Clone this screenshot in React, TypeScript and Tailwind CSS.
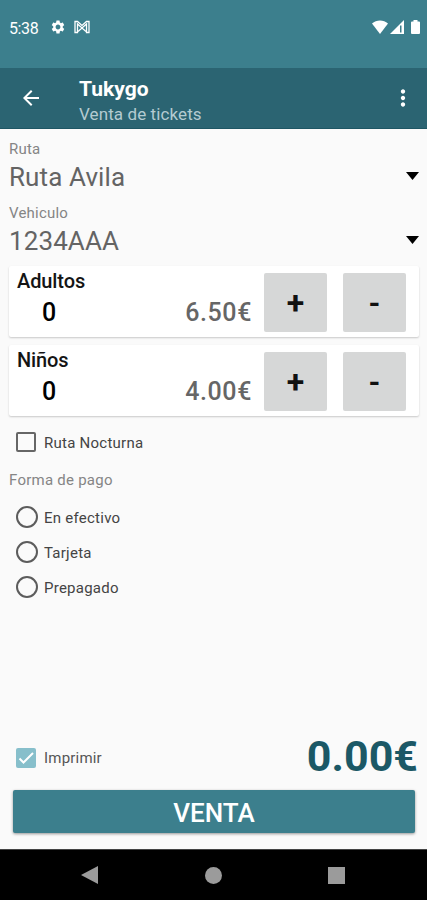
import { useState } from "react";
import { MdArrowBack, MdMoreVert, MdSettings } from "react-icons/md";

const tickets = [
  { id: "adultos", name: "Adultos", price: 6.5 },
  { id: "ninos", name: "Niños", price: 4 },
];

const payments = ["En efectivo", "Tarjeta", "Prepagado"];

function StatusBar() {
  return (
    <div className="flex h-[68px] items-start justify-between bg-[#3c7f8d] pl-[9px] pr-[7px] pt-[17px] text-white">
      <div className="flex h-5 items-center">
        <span className="mt-[3px] w-[41px] text-[16px] leading-5 tracking-[-0.4px]">5:38</span>
        <MdSettings className="h-4 w-4" />
        <svg className="ml-2 h-[14px] w-4" viewBox="0 0 16 14" fill="none" stroke="white">
          <path d="M1 1.500v11h2.500V4L8 8l4.500-4v8.500H15v-11h-2.500L8 5.500l-4.500-4z" strokeWidth="1.300" />
          <path d="M4 11.500l4-3.500 4 3.500" strokeWidth="1.300" />
        </svg>
      </div>
      <div className="flex h-5 items-center">
        <svg className="h-[14px] w-4" viewBox="0 0 16 14" fill="white">
          <path d="M8 14L0 3.500C4.500-.5 11.500-.5 16 3.500z" />
        </svg>
        <svg className="ml-[2px] h-[14px] w-[14px]" viewBox="0 0 14 14">
          <path d="M0 14L14 0v14z" fill="white" />
          <path d="M10 5.500h1.500V12.500H10z" fill="#3c7f8d" />
        </svg>
        <svg className="ml-[7px] h-[14px] w-[9px]" viewBox="0 0 9 14" fill="white">
          <path d="M2.500 0h4v1.500H8q1 0 1 1V13q0 1-1 1H1q-1 0-1-1V2.500q0-1 1-1h1.500z" />
        </svg>
      </div>
    </div>
  );
}

function Field({ label, value }: { label: string; value: string }) {
  return (
    <div className="h-16">
      <div className="text-[15px] leading-5 tracking-[0.2px] text-[#858585]">{label}</div>
      <div className="flex h-9 items-center justify-between">
        <span className="text-[26px] leading-9 tracking-[0.1px] text-[#646464]">{value}</span>
        <svg className="mb-[2px] h-2 w-[13px]" viewBox="0 0 13 8">
          <path d="M0 0h13L6.500 8z" fill="black" />
        </svg>
      </div>
    </div>
  );
}

function TicketCard({
  name,
  price,
  count,
  onChange,
}: {
  name: string;
  price: number;
  count: number;
  onChange: (count: number) => void;
}) {
  return (
    <div className="flex h-[71px] rounded-[2px] bg-white pl-2 pr-[13px] pt-[7px] shadow-[0_1px_2px_rgba(0,0,0,0.2)]">
      <div className="mr-3 flex-1 font-medium">
        <div className="-mt-1 text-[20px] leading-6 tracking-[-0.1px] text-[#141414]">{name}</div>
        <div className="mt-1 flex justify-between text-[25px] leading-8">
          <span className="pl-[25px] text-black">{count}</span>
          <span className="tracking-[0.6px] text-[#666666]">{price.toFixed(2)}€</span>
        </div>
      </div>
      <button
        className="mr-4 h-[59px] w-[63px] rounded-[2px] bg-[#d6d7d7] text-[32px] leading-8 font-bold text-[#111111]"
        onClick={() => onChange(count + 1)}
      >
        +
      </button>
      <button
        className="h-[59px] w-[63px] rounded-[2px] bg-[#d6d7d7] text-[30px] leading-8 font-bold text-[#111111]"
        onClick={() => onChange(Math.max(0, count - 1))}
      >
        -
      </button>
    </div>
  );
}

function App() {
  const [counts, setCounts] = useState<Record<string, number>>({ adultos: 0, ninos: 0 });
  const [night, setNight] = useState(false);
  const [payment, setPayment] = useState("");
  const [print, setPrint] = useState(true);

  const total = tickets.reduce((sum, t) => sum + t.price * counts[t.id], 0);

  return (
    <div className="flex h-[900px] w-[427px] flex-col bg-[#fafafa] font-[Roboto,sans-serif]">
      <StatusBar />

      <header className="flex h-[61px] items-center border-b border-[#1e5664] bg-[#2b6472] pl-[19px] pr-[11px] text-white">
        <MdArrowBack className="h-6 w-6" />
        <div className="ml-9 flex-1 pt-[7px]">
          <div className="text-[21px] leading-6 font-bold">Tukygo</div>
          <div className="mt-px text-[17px] leading-6 tracking-[0.1px] text-[#b4cbd1]">Venta de tickets</div>
        </div>
        <MdMoreVert className="h-[26px] w-[26px]" />
      </header>

      <main className="flex flex-1 flex-col pt-[10px] pr-2 pl-[9px]">
        <div className="h-[127px]">
          <Field label="Ruta" value="Ruta Avila" />
          <Field label="Vehiculo" value="1234AAA" />
        </div>

        <div className="flex flex-col gap-2">
          {tickets.map((t) => (
            <TicketCard
              key={t.id}
              name={t.name}
              price={t.price}
              count={counts[t.id]}
              onChange={(count) => setCounts({ ...counts, [t.id]: count })}
            />
          ))}
        </div>

        <label className="mt-4 ml-[7px] flex h-5 items-center">
          <input type="checkbox" className="sr-only" checked={night} onChange={() => setNight(!night)} />
          <span
            className={`h-5 w-5 rounded-[2px] border-2 border-[#666666] ${night ? "bg-[#3c7f8d]" : ""}`}
          />
          <span className="mt-[2px] ml-2 text-[15px] leading-5 tracking-[0.25px] text-[#444444]">Ruta Nocturna</span>
        </label>

        <div className="mt-[18px] text-[15px] leading-5 tracking-[0.25px] text-[#858585]">Forma de pago</div>

        <div className="mt-[10px] ml-[7px]">
          {payments.map((p) => (
            <label key={p} className="flex h-[35px] items-center">
              <input
                type="radio"
                name="payment"
                className="sr-only"
                checked={payment === p}
                onChange={() => setPayment(p)}
              />
              <span className="mb-px flex h-[22px] w-[22px] items-center justify-center rounded-full border-2 border-[#5c5c5c]">
                {payment === p && <span className="h-[10px] w-[10px] rounded-full bg-[#3c7f8d]" />}
              </span>
              <span className="ml-[6px] text-[15px] leading-5 tracking-[0.25px] text-[#444444]">{p}</span>
            </label>
          ))}
        </div>

        <div className="mt-auto flex h-[56px] items-center justify-between pl-[7px]">
          <label className="flex items-center">
            <input type="checkbox" className="sr-only" checked={print} onChange={() => setPrint(!print)} />
            <span className="flex h-5 w-5 items-center justify-center rounded-[2px] bg-[#87bfcb]">
              {print && (
                <svg className="h-5 w-5" viewBox="0 0 20 20" fill="none" stroke="white" strokeWidth="2">
                  <path d="M3.500 10.500l4 4L17 5" />
                </svg>
              )}
            </span>
            <span className="ml-2 text-[15px] leading-5 tracking-[0.2px] text-[#555555]">Imprimir</span>
          </label>
          <span className="mr-px mb-1 text-[43px] leading-[52px] font-bold text-[#1b5866]">{total.toFixed(2)}€</span>
        </div>

        <button className="mr-1 ml-1 mt-1 mb-4 h-[43px] rounded-[2px] bg-[#3c7f8d] pt-[2px] text-[26px] leading-8 font-medium text-white shadow-[0_1px_3px_rgba(0,0,0,0.4)]">
          VENTA
        </button>
      </main>

      <nav className="flex h-[51px] items-center justify-between border-t border-[#444444] bg-black pl-[81px] pr-[82px]">
        <svg className="h-[18px] w-[17px]" viewBox="0 0 17 18">
          <path d="M0 9L17 0v18z" fill="#9b9b9b" />
        </svg>
        <span className="h-[17px] w-[17px] rounded-full bg-[#9b9b9b]" />
        <span className="h-[17px] w-[17px] bg-[#9b9b9b]" />
      </nav>
    </div>
  );
}

export default App;
